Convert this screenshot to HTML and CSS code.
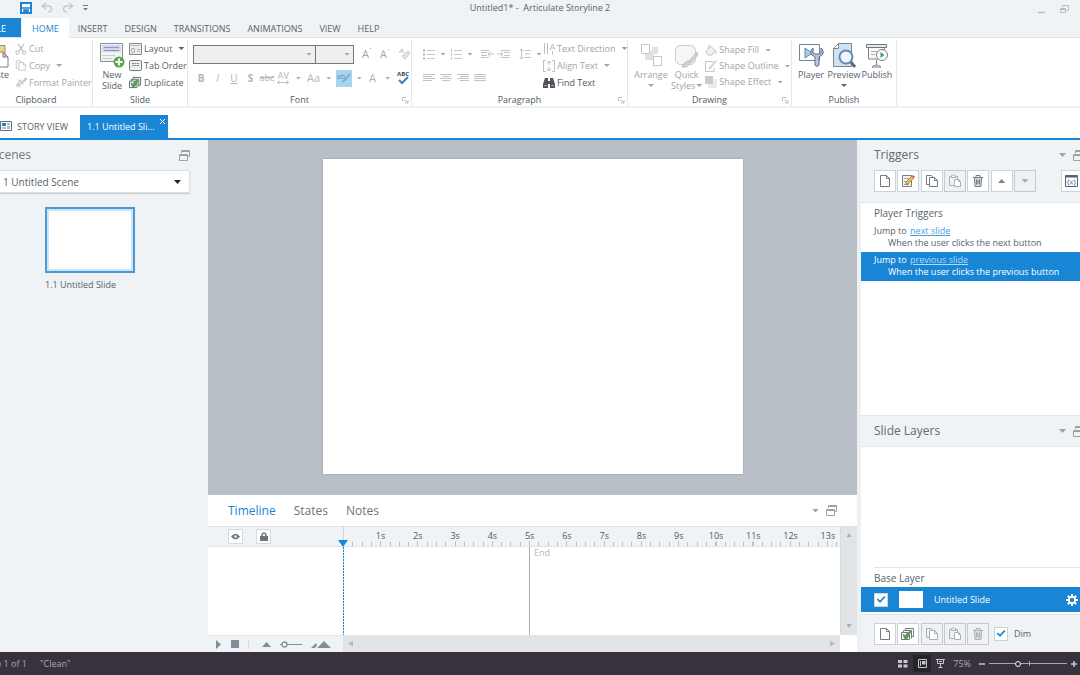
FILE: index.html
```html
<!DOCTYPE html>
<html lang="en">
<head>
<meta charset="utf-8">
<title>Untitled1* - Articulate Storyline 2</title>
<link rel="stylesheet" href="styles.css">
</head>
<body>
<svg class="defs" aria-hidden="true">
  <symbol id="restore" viewBox="0 0 11 11"><path d="M2.500 3V.500h8v6h-2M2.500 1.500h8M.5 4.500h8v6h-8zM.5 5.500h8" fill="none" stroke="currentColor"/></symbol>
  <symbol id="page" viewBox="0 0 14 14"><path d="M2.500 1.500h6l3 3v8h-9zM8.500 1.500v3h3" fill="#fff" stroke="currentColor"/></symbol>
  <symbol id="copy" viewBox="0 0 14 14"><path d="M1.500 10.500v-9h5l2 2M1.500 10.500h3" fill="none" stroke="currentColor"/><path d="M4.500 3.500h5l3 3v6h-8zM9.500 3.500v3h3" fill="#fff" stroke="currentColor"/></symbol>
  <symbol id="paste" viewBox="0 0 14 14"><path d="M6 11.500H1.500v-9h2m4 0h2v3M3.500 3.500v-2h1l1-1 1 1h1v2z" fill="none" stroke="currentColor"/><path d="M6.500 5.500h4l2 2v5h-6zM10.500 5.500v2h2" fill="#fff" stroke="currentColor"/></symbol>
  <symbol id="trash" viewBox="0 0 14 14"><path d="M3.500 4h7l-.5 8.500H4z" fill="currentColor" fill-opacity=".25"/><path d="M2 3.500h10M5 3V1.500h4V3M3.500 4l.5 8.500h6l.5-8.500M5.500 5.500v5M7 5.500v5M8.500 5.500v5" fill="none" stroke="currentColor"/></symbol>
  <symbol id="dup" viewBox="0 0 14 14"><path d="M4.500 3.500v-2h8v8h-2M2.500 5.500v-2h8v8" fill="#fff" stroke="currentColor"/><path d="M.5 5.500h8v7h-8z" fill="#fff" stroke="currentColor"/><path d="M1.500 7.500l1.500-.5 1 1.500q2-4 7-5-2 3-2.500 5.500L6 12H3.500z" fill="#5c9e4f"/></symbol>
  <symbol id="launch" viewBox="0 0 7 7"><path d="M.5 4V.5H4M2.500 2.500l3 3M6 3v3H3" fill="none" stroke="currentColor"/></symbol>
</svg>

<header class="titlebar">
  <div class="quick">
    <button aria-label="Save"><svg width="12" height="12" viewBox="0 0 12 12"><path d="M1 1h10v10H1z" fill="#fff" stroke="#1f84cf" stroke-width="2"/><path d="M1 6h10M4 8h4v3H4z" stroke="#1f84cf" stroke-width="1.500" fill="#1f84cf"/></svg></button>
    <button aria-label="Undo"><svg width="12" height="11" viewBox="0 0 12 11"><path d="M5 1L1.500 4 5 7M2 4h5q3.500 0 3.500 3T7 10" fill="none" stroke="#c7cbce" stroke-width="1.600"/></svg></button>
    <button aria-label="Redo"><svg width="12" height="11" viewBox="0 0 12 11"><path d="M7 1l3.500 3L7 7M10 4H5Q1.500 4 1.500 7T5 10" fill="none" stroke="#c7cbce" stroke-width="1.600"/></svg></button>
    <button aria-label="Customize toolbar"><svg width="5" height="6" viewBox="0 0 5 6"><path d="M0 0h5v1H0zM0 3h5L2.500 5.500z" fill="#747a80"/></svg></button>
  </div>
  <h1>Untitled1* -&nbsp; Articulate Storyline 2</h1>
  <div class="win">
    <button aria-label="Minimize"><svg width="8" height="9" viewBox="0 0 8 9"><path d="M0 7.500h7" stroke="#b9bdc0" stroke-width="1.500"/></svg></button>
    <button aria-label="Restore"><svg width="9" height="9" viewBox="0 0 9 9"><path d="M2.500 2.500v-2h6v5h-2M.5 3.500h5v4h-5zM.5 4.500h5" fill="none" stroke="#b9bdc0"/></svg></button>
  </div>
</header>

<nav class="tabs">
  <button class="file">FILE</button>
  <button class="home">HOME</button>
  <button>INSERT</button><button>DESIGN</button><button>TRANSITIONS</button><button>ANIMATIONS</button><button>VIEW</button><button>HELP</button>
</nav>

<section class="ribbon">
  <div class="group clipboard">
    <div class="body">
      <button class="paste"><svg width="24" height="25" viewBox="0 0 24 25"><path d="M1 2.500h19v19H1z" fill="#f1d48c" stroke="#8b8f93"/><path d="M10 9h8l5 5v10H10zM18 9v5h5" fill="#fff" stroke="#7c8185"/></svg><span>Paste</span></button>
      <div class="stack off">
        <button><svg width="12" height="12" viewBox="0 0 12 12"><path d="M3 1l5 7M9 1L4 8" stroke="#b6babd" stroke-width="1.200"/><circle cx="2.500" cy="9.500" r="1.700" fill="none" stroke="#b6babd"/><circle cx="9" cy="9.500" r="1.700" fill="none" stroke="#b6babd"/></svg>Cut</button>
        <button><svg class="pale" width="12" height="13"><use href="#copy"/></svg>Copy<i class="car"></i></button>
        <button><svg width="12" height="12" viewBox="0 0 12 12"><path d="M11.500 1L8 5" stroke="#c3c6c9" stroke-width="2.500"/><path d="M5 2l4 5-2 1-4-4zM3 5l3 3-2 3-1-2-3 1z" fill="#cdd0d2"/></svg>Format Painter</button>
      </div>
    </div>
    <footer><h2>Clipboard</h2></footer>
  </div>
  <div class="group slide">
    <div class="body">
      <button class="big"><svg width="26" height="26" viewBox="0 0 26 26"><path d="M1.500.5h22v18h-22z" fill="#f1f3f5" stroke="#8b9095"/><path d="M3 2h19v7H3z" fill="#cfd7ee"/><path d="M5 4.500h15M5 7.500h15" stroke="#8e9ab8"/><path d="M3 12.500h13M3 15.500h10" stroke="#c7cbce"/><circle cx="20" cy="19" r="5.500" fill="#57a74c"/><path d="M20 15.500v7M16.500 19h7" stroke="#fff" stroke-width="2"/></svg>New<br>Slide</button>
      <div class="stack">
        <button><svg width="13" height="12" viewBox="0 0 13 12"><path d="M.5.5h12v11H.5z" fill="#eee" stroke="#85898d"/><path d="M2 2.500h9M2.500 5.500h3v4h-3zM8 6.500h3M8 8.500h3" fill="#e2e4e5" stroke="#b3b7ba"/></svg>Layout<i class="car"></i></button>
        <button><svg width="13" height="12" viewBox="0 0 13 12"><rect x=".5" y=".5" width="12" height="10" rx="1" fill="#eceeef" stroke="#777c80"/><path d="M3 3.500h7M3 5.500h7" stroke="#888d91" stroke-dasharray="2 .5"/></svg>Tab Order</button>
        <button><svg width="13" height="13"><use href="#dup"/></svg>Duplicate</button>
      </div>
    </div>
    <footer><h2>Slide</h2></footer>
  </div>
  <div class="group font">
    <div class="body rows off">
      <div class="row">
        <span class="sel wide"><select aria-label="Font family" disabled><option></option></select><i class="car"></i></span><span class="sel"><select aria-label="Font size" disabled><option></option></select><i class="car"></i></span>
        <div class="sizes"><button aria-label="Grow font"><span class="ltr">A<sup>ˆ</sup></span></button><button aria-label="Shrink font"><span class="ltr small">A<sup>ˇ</sup></span></button><button aria-label="Clear formatting"><svg width="12" height="12" viewBox="0 0 12 12"><path d="M1 5l3-4 2 4M6 7l4-4 2 2-5 6-3-3z" fill="#e6e6e6" stroke="#c4c6c8"/></svg></button></div>
      </div>
      <div class="row marks">
        <button><b>B</b></button><button><em>I</em></button><button><u>U</u></button><button><b>S</b></button><button class="strike">abc</button><button class="av"><span>AV</span><svg width="12" height="5" viewBox="0 0 12 5"><path d="M0 2.500h12M2.500.5l-2 2 2 2M9.500.5l2 2-2 2" fill="none" stroke="#bbbfc2"/></svg></button><i class="car"></i><button class="aa">Aa</button><i class="car"></i><button class="hl" aria-label="Highlight"><svg width="14" height="12" viewBox="0 0 14 12"><text x="0" y="7" font-size="7" fill="#6e91a8">ab</text><path d="M13 2L8 8l-3 2" stroke="#78a0b9" stroke-width="1.500" fill="none"/></svg></button><i class="car"></i><button class="aa">A</button><i class="car"></i><button class="spell" aria-label="Spelling"><svg width="14" height="14" viewBox="0 0 14 14"><text x="1" y="5" font-size="6" font-weight="700" fill="#444">ABC</text><path d="M3 9l3 3 6-6" stroke="#3e7fc0" stroke-width="2" fill="none"/></svg></button>
      </div>
    </div>
    <footer><h2>Font</h2><svg width="7" height="7"><use href="#launch"/></svg></footer>
  </div>
  <div class="group para">
    <div class="body off">
      <div class="rows">
        <div class="row bullets">
          <button aria-label="Bullets"><svg width="12" height="11" viewBox="0 0 12 11"><path d="M4 1.500h8M4 5.500h8M4 9.500h8" stroke="#c6c9cb"/><path d="M0 1.500h2M0 5.500h2M0 9.500h2" stroke="#b0b4b7" stroke-width="2"/></svg></button><i class="car"></i>
          <button aria-label="Numbering"><svg width="12" height="11" viewBox="0 0 12 11"><path d="M4 1.500h8M4 5.500h8M4 9.500h8" stroke="#c6c9cb"/><path d="M1.500 0v3M1.500 4v3M1.500 8v3" stroke="#c0c3c6"/></svg></button><i class="car"></i>
          <button class="dec" aria-label="Decrease indent"><svg width="13" height="10" viewBox="0 0 13 10"><path d="M0 1.500h8M0 3.500h6M0 6.500h6M0 8.500h8M7 5h6M9.500 2.500L7 5l2.500 2.500" stroke="#c0c3c6" fill="none"/></svg></button>
          <button aria-label="Increase indent"><svg width="13" height="10" viewBox="0 0 13 10"><path d="M4 1.500h9M7 3.500h6M7 6.500h6M4 8.500h9M0 5h6M3.500 2.500L6 5 3.500 7.500" stroke="#c0c3c6" fill="none"/></svg></button>
          <button class="spacing" aria-label="Line spacing"><svg width="12" height="12" viewBox="0 0 12 12"><path d="M2.500 1v10M.5 3l2-2 2 2M.5 9l2 2 2-2M6 2.500h6M6 6h5M6 9.500h6" stroke="#c0c3c6" fill="none"/></svg></button><i class="car"></i>
        </div>
        <div class="row aligns">
          <button aria-label="Align left"><svg width="12" height="8" viewBox="0 0 12 8"><path d="M0 .5h12M0 2.500h9M0 4.500h12M0 6.500h9" stroke="#c0c3c6"/></svg></button>
          <button aria-label="Center"><svg width="12" height="8" viewBox="0 0 12 8"><path d="M0 .5h12M2 2.500h8M0 4.500h12M2 6.500h8" stroke="#c0c3c6"/></svg></button>
          <button aria-label="Align right"><svg width="12" height="8" viewBox="0 0 12 8"><path d="M0 .5h12M3 2.500h9M0 4.500h12M3 6.500h9" stroke="#c0c3c6"/></svg></button>
          <button aria-label="Justify"><svg width="12" height="8" viewBox="0 0 12 8"><path d="M0 .5h12M0 2.500h12M0 4.500h12M0 6.500h12" stroke="#c0c3c6"/></svg></button>
        </div>
      </div>
      <div class="stack">
        <button><svg width="12" height="12" viewBox="0 0 12 12"><path d="M1.500 0v11M4.500 0v11M7 7l2.500-6L12 7M8 5h3M9.500 8v4" stroke="#bbbfc2" fill="none"/></svg>Text Direction<i class="car"></i></button>
        <button><svg width="12" height="12" viewBox="0 0 12 12"><path d="M3 .5H.5v11H3M9 .5h2.500v11H9M6 1v4M6 7v4M4 3l2-2 2 2M4 9l2 2 2-2" stroke="#bbbfc2" fill="none"/></svg>Align Text<i class="car"></i></button>
        <button class="on"><svg width="12" height="11" viewBox="0 0 12 11"><path d="M2 1h3v3h2V1h3l2 6v4H7V7H5v4H0V7z" fill="#50555b"/><path d="M1.500 8.500h2M8.500 8.500h2" stroke="#c9ccce"/></svg>Find Text</button>
      </div>
    </div>
    <footer><h2>Paragraph</h2><svg width="7" height="7"><use href="#launch"/></svg></footer>
  </div>
  <div class="group drawing">
    <div class="body off">
      <button class="big arr"><svg width="23" height="26" viewBox="0 0 23 26"><path d="M5 8h9v9H5zM12 4h6v7h-6z" fill="#e1e2e3"/><path d="M1.500 1.500h8v9h-8zM13.500 13.500h8v9h-8z" fill="#fff" stroke="#c5c7c9"/></svg>Arrange<i class="car"></i></button>
      <button class="big"><svg width="25" height="26" viewBox="0 0 25 26"><rect x="1.500" y="2.500" width="20" height="19" rx="5" fill="#f6f6f6" stroke="#c9cbcd"/><path d="M23 9l-8 9 2 2 7-8zM14 18q-4 1-6 6 6 1 8-4z" fill="#d1d2d3" stroke="#bdbfc1"/></svg>Quick<br><span>Styles<i class="car"></i></span></button>
      <div class="stack">
        <button><svg width="12" height="12" viewBox="0 0 12 12"><path d="M5 2l5 4-3 5H3L1 7zM4 1v4M11 6v4" fill="#f2f2f2" stroke="#c4c6c8"/></svg>Shape Fill<i class="car"></i></button>
        <button><svg width="12" height="12" viewBox="0 0 12 12"><path d="M8 1.500H.5v10H9V8M11.500 1L6 8l-2 1 1-2 5-6z" fill="none" stroke="#c4c6c8"/></svg>Shape Outline<i class="car"></i></button>
        <button><svg width="12" height="12" viewBox="0 0 12 12"><path d="M3 3h9v9H3z" fill="#eaebec"/><path d="M0 0h8v8H0z" fill="#c9cbcd"/></svg>Shape Effect<i class="car"></i></button>
      </div>
    </div>
    <footer><h2>Drawing</h2><svg width="7" height="7"><use href="#launch"/></svg></footer>
  </div>
  <div class="group publish">
    <div class="body">
      <button class="big"><svg width="26" height="26" viewBox="0 0 26 26"><path d="M1.500 1.500h20v16h-20z" fill="#fff" stroke="#7b838b"/><path d="M7 5v10l7-5z" fill="#a9cce7" stroke="#6289ad"/><path d="M15 5q-4 4-1 7l3 2v8q2 3 4 0v-8l3-2q3-3-1-7v5l-2 1h-4l-2-1z" fill="#b4c7dd" stroke="#596f87"/></svg>Player</button>
      <button class="big"><svg width="26" height="26" viewBox="0 0 26 26"><path d="M7.500.5h13v23h-18v-18zM2.500 5.500h5v-5" fill="#cfe2f4" stroke="#7b838b"/><path d="M19 18l5 6" stroke="#596f87" stroke-width="3"/><circle cx="15" cy="14" r="6.500" fill="#edf6fe" stroke="#6689b2" stroke-width="2"/></svg>Preview<i class="car"></i></button>
      <button class="big"><svg width="24" height="26" viewBox="0 0 24 26"><path d="M1.500 1.500h20v3h-20z" fill="#e8eaeb" stroke="#6f767c"/><path d="M3.500 5v11h16V5M11.500 17v5M7 24q4-4 9 0z" fill="#f8f9f9" stroke="#7b8288"/><path d="M6 8.500h6M6 11.500h4" stroke="#adb2b5"/><circle cx="17" cy="12" r="5.500" fill="#fff" stroke="#7b8288"/><path d="M15.500 9l4 3-4 3z" fill="#479b76"/></svg>Publish</button>
    </div>
    <footer><h2>Publish</h2></footer>
  </div>
</section>

<nav class="docs">
  <button class="story"><svg width="12" height="11" viewBox="0 0 12 11"><path d="M.5.5h11v9H.5z" fill="#fff" stroke="#666c72"/><path d="M2 2h4v3H2z" fill="#1985d5"/><path d="M2 6h4v2H2zM7 2h3v2H7zM7 5h3v3H7z" fill="#b3bbc2"/></svg>STORY VIEW</button>
  <button class="doc">1.1 Untitled Sli...<svg width="5" height="5" viewBox="0 0 5 5"><path d="M0 0l5 5M5 0L0 5" stroke="#fff"/></svg></button>
</nav>

<main>
  <aside class="scenes">
    <div class="head"><h2>Scenes</h2><button aria-label="Undock"><svg width="11" height="11"><use href="#restore"/></svg></button></div>
    <div class="picker"><select aria-label="Scene"><option>1 Untitled Scene</option></select><i class="car"></i></div>
    <figure><div class="thumb"></div><figcaption>1.1 Untitled Slide</figcaption></figure>
  </aside>

  <section class="center">
    <div class="stage"><div class="canvas"></div></div>
    <div class="timeline">
      <div class="ptabs">
        <button class="cur">Timeline</button><button>States</button><button>Notes</button>
        <span class="tools"><i class="car"></i><svg width="11" height="11"><use href="#restore"/></svg></span>
      </div>
      <div class="grid">
        <div class="eyes">
          <button aria-label="Show all"><svg width="9" height="7" viewBox="0 0 9 7"><path d="M0 3.500Q4.500-2 9 3.500 4.500 9 0 3.500z" fill="#6c747b"/><circle cx="4.500" cy="3.500" r="1.200" fill="#fff"/></svg></button>
          <button aria-label="Lock all"><svg width="8" height="9" viewBox="0 0 8 9"><path d="M2 4V2.500q2-3 4 0V4" fill="none" stroke="#6c747b" stroke-width="1.500"/><path d="M0 4h8v5H0z" fill="#6c747b"/></svg></button>
        </div>
        <div class="ruler"><span>1s</span><span>2s</span><span>3s</span><span>4s</span><span>5s</span><span>6s</span><span>7s</span><span>8s</span><span>9s</span><span>10s</span><span>11s</span><span>12s</span><span>13s</span></div>
        <div class="vscroll"><i class="up"></i><i class="down"></i></div>
        <div class="names"></div>
        <div class="track"><span class="end">End</span><svg class="head-mark" width="10" height="7" viewBox="0 0 10 7"><path d="M0 0h10L5 7z" fill="#1985d5"/></svg></div>
        <div class="play">
          <button aria-label="Play"><svg width="6" height="9" viewBox="0 0 6 9"><path d="M0 0l5 4.500L0 9z" fill="#848d95"/></svg></button>
          <button aria-label="Stop"><svg width="8" height="8" viewBox="0 0 8 8"><path d="M0 0h8v8H0z" fill="#848d95"/></svg></button>
          <i class="bar"></i>
          <svg width="9" height="5" viewBox="0 0 9 5"><path d="M0 5l4.500-5L9 5z" fill="#848d95"/></svg>
          <svg width="22" height="7" viewBox="0 0 22 7"><path d="M0 3.500h2M7 3.500h15" stroke="#848d95"/><circle cx="4.500" cy="3.500" r="2.500" fill="none" stroke="#848d95" stroke-width="1.300"/></svg>
          <svg width="20" height="7" viewBox="0 0 20 7"><path d="M0 7l5-5 1 2-2 3zM6 7l7-7 7 7z" fill="#848d95"/></svg>
        </div>
        <div class="hscroll"><i class="lt"></i><i class="rt"></i></div>
      </div>
    </div>
  </section>

  <aside class="side">
    <div class="trig-head">
      <div class="head"><h2>Triggers</h2><span class="tools"><i class="car"></i><svg width="11" height="11"><use href="#restore"/></svg></span></div>
      <div class="bar-row">
        <div class="btns seven">
          <button aria-label="New trigger"><svg width="14" height="14"><use href="#page"/></svg></button>
          <button aria-label="Edit trigger"><svg width="14" height="14" viewBox="0 0 14 14"><path d="M1.500 1.500h9v11h-9z" fill="#f0f1f3" stroke="#7a8086"/><path d="M3 4.500h5M3 7.500h4M3 10.500h5" stroke="#a5abb2"/><path d="M5 8l6-6 2 2-6 6-2 .5z" fill="#f2bd52" stroke="#8c6b3c" stroke-width=".7"/><path d="M11 2l1-1 2 2-1 1z" fill="#c7515a"/></svg></button>
          <button aria-label="Copy trigger"><svg width="14" height="14"><use href="#copy"/></svg></button>
          <button disabled aria-label="Paste trigger"><svg width="14" height="14"><use href="#paste"/></svg></button>
          <button aria-label="Delete trigger"><svg width="14" height="14"><use href="#trash"/></svg></button>
          <button aria-label="Move up"><i class="up"></i></button>
          <button disabled aria-label="Move down"><i class="down"></i></button>
        </div>
        <div class="btns"><button aria-label="Variables"><svg width="14" height="14" viewBox="0 0 14 14"><path d="M.5 1.500h12v11H.5z" fill="#fff" stroke="#59636d"/><path d="M1 2.500h11" stroke="#59636d" stroke-width="2"/><path d="M5 6.500l3 4M8 6.500l-3 4M3.500 5.500q-1.500 3 0 6M9.500 5.500q1.500 3 0 6" stroke="#558ccc" fill="none"/></svg></button></div>
      </div>
    </div>
    <div class="trig-list">
      <h3>Player Triggers</h3>
      <div class="trig"><p>Jump to <a href="#next">next slide</a></p><p class="when">When the user clicks the next button</p></div>
      <div class="trig picked"><p>Jump to <a href="#previous">previous slide</a></p><p class="when">When the user clicks the previous button</p></div>
    </div>
    <div class="head layers-head"><h2>Slide Layers</h2><span class="tools"><i class="car"></i><svg width="11" height="11"><use href="#restore"/></svg></span></div>
    <div class="layers">
      <h3>Base Layer</h3>
      <div class="layer"><input type="checkbox" checked aria-label="Show layer"><span class="mini"></span><span>Untitled Slide</span>
        <button aria-label="Layer settings"><svg width="12" height="12" viewBox="0 0 12 12"><circle cx="6" cy="6" r="3.200" fill="none" stroke="#fff" stroke-width="2"/><path d="M6 0v2M6 10v2M0 6h2M10 6h2M1.800 1.800l1.400 1.400M8.800 8.800l1.400 1.400M1.800 10.200l1.400-1.400M8.800 3.200l1.400-1.400" stroke="#fff" stroke-width="2"/></svg></button></div>
    </div>
    <div class="layer-foot">
      <div class="btns five">
        <button aria-label="New layer"><svg width="14" height="14"><use href="#page"/></svg></button>
        <button aria-label="Duplicate layer"><svg width="14" height="14"><use href="#dup"/></svg></button>
        <button disabled aria-label="Copy layer"><svg width="14" height="14"><use href="#copy"/></svg></button>
        <button disabled aria-label="Paste layer"><svg width="14" height="14"><use href="#paste"/></svg></button>
        <button disabled aria-label="Delete layer"><svg width="14" height="14"><use href="#trash"/></svg></button>
      </div>
      <label><input type="checkbox" checked>Dim</label>
    </div>
  </aside>
</main>

<footer class="status">
  <span class="count">Slide 1 of 1</span><span>"Clean"</span>
  <div class="zoom">
    <button aria-label="Story view"><svg width="10" height="8" viewBox="0 0 10 8"><path d="M0 0h4v3H0zM5.500 0h4v3h-4zM0 4.500h4v3H0zM5.500 4.500h4v3h-4z" fill="#c9c8cc"/></svg></button>
    <button class="active" aria-label="Slide view"><svg width="9" height="9" viewBox="0 0 9 9"><path d="M.5.5h8v8h-8z" fill="none" stroke="#c9c8cc"/><path d="M2 2h1v5H2zM4 2h3.500v3.500H4z" fill="#c9c8cc"/></svg></button>
    <button aria-label="Preview"><svg width="9" height="9" viewBox="0 0 9 9"><path d="M0 .5h9M1.500 1v3.500h6V1M4.500 5v3M2.500 8.500h4M3 2.500h3" fill="none" stroke="#c9c8cc"/></svg></button>
    <span>75%</span>
    <button aria-label="Zoom out"><svg width="6" height="6" viewBox="0 0 6 6"><path d="M0 3h6" stroke="#c9c8cc" stroke-width="1.500"/></svg></button>
    <input type="range" min="0" max="100" value="36" aria-label="Zoom">
    <button aria-label="Zoom in"><svg width="6" height="6" viewBox="0 0 6 6"><path d="M0 3h6M3 0v6" stroke="#c9c8cc" stroke-width="1.500"/></svg></button>
  </div>
</footer>
</body>
</html>
```
FILE: styles.css
```css
* { box-sizing: border-box; }
html, body { height: 100%; }
body { margin: 0; display: flex; flex-direction: column; overflow: hidden; background: #fff; color: #56636d; font: 9px/12px "Open Sans", "Noto Sans", sans-serif; }
h1, h2, h3, p, figure { margin: 0; font-weight: 400; }
h1, h3 { font-size: 9px; }
button, select { font: inherit; color: inherit; background: none; border: 0; padding: 0; margin: 0; white-space: nowrap; }
svg { flex: none; display: block; }
.defs { position: absolute; width: 0; height: 0; }
button { display: flex; align-items: center; justify-content: center; }

.car { flex: none; width: 6px; height: 3px; background: currentColor; clip-path: polygon(0 0, 100% 0, 50% 100%); }
.up, .down { width: 7px; height: 4px; background: #79818a; }
.up { clip-path: polygon(50% 0, 100% 100%, 0 100%); }
.down { clip-path: polygon(0 0, 100% 0, 50% 100%); }
.lt, .rt { width: 5px; height: 6px; background: #b4babf; }
.lt { clip-path: polygon(0 50%, 100% 0, 100% 100%); }
.rt { clip-path: polygon(0 0, 100% 50%, 0 100%); }
.pale { color: #c0c4c7; }

.titlebar { height: 18px; flex: none; display: grid; grid-template-columns: 1fr auto 1fr; background: #eff3f5; }
.titlebar h1 { line-height: 16px; }
.quick { display: flex; align-items: center; gap: 9px; padding: 0 0 3px 20px; }
.win { display: flex; justify-content: flex-end; align-items: center; gap: 14px; padding-right: 11px; }

.tabs { display: flex; flex: none; height: 20px; background: #eff3f5; border-bottom: 1px solid #e1e6ea; }
.tabs button { padding: 2px 8px 0 9px; }
.tabs .file { width: 21px; padding: 2px 15px 0 0; justify-content: flex-end; overflow: hidden; background: #1985d5; color: #fff; }
.tabs .home { margin-left: 1px; padding: 2px 10px 0; background: #fff; color: #1985d5; height: 20px; }

.ribbon { display: flex; flex: none; height: 70px; border-bottom: 2px solid #edf1f4; }
.group { display: flex; flex-direction: column; border-right: 1px solid #e4e8ec; margin-top: 2px; }
.group .body { display: flex; flex: 1; min-height: 0; padding-left: 6px; }
.group footer { flex: none; display: grid; grid-template-columns: 12px 1fr 12px; align-items: center; height: 12px; color: #b9bec2; }
.group h2 { grid-column: 2; font-size: 9px; line-height: 12px; text-align: center; color: #4f5a63; }
.group footer svg { justify-self: center; }
.clipboard { width: 93px; } .slide { width: 95px; } .font { width: 224px; }
.para { width: 216px; } .drawing { width: 164px; } .publish { width: 105px; }
.clipboard footer { grid-template-columns: 0 72px; }
.clipboard .body { padding: 0; }
.paste { width: 9px; flex-direction: column; align-items: flex-end; justify-content: flex-start; gap: 1px; padding: 3px 0 0; overflow: hidden; }
.clipboard .stack { padding-left: 6px; }
.stack button { height: 17px; gap: 2px; justify-content: flex-start; }
.stack .car { margin-left: 4px; }
.off { color: #9fa5a9; }
.off .on { color: #4f5a63; }
.big { flex-direction: column; justify-content: flex-start; line-height: 11px; padding-top: 3px; }
.big > .car { margin-top: 4px; }
.big span { display: flex; align-items: center; gap: 1px; }
.slide .stack { padding-left: 4px; }
.slide .big { width: 26px; }

.row { display: flex; align-items: center; height: 24px; }
.group .rows { flex-direction: column; padding-top: 2px; }
.font .rows { padding-left: 5px; }
.sel { position: relative; display: flex; width: 39px; height: 19px; margin-left: -1px; }
.sel.wide { width: 123px; margin: 0; }
.sel select { appearance: none; width: 100%; border: 1px solid #777; background: #efefef; border-radius: 0; opacity: 1; }
.sel .car { position: absolute; right: 4px; top: 8px; }
.sizes { display: flex; justify-content: space-between; width: 48px; margin-left: 8px; }
.ltr { font-size: 11px; } .ltr.small { font-size: 10px; } .ltr sup { font-size: 7px; line-height: 0; }
.marks { color: #b0b5b8; }
.marks button { width: 17px; height: 17px; font-size: 10px; }
.marks .strike { text-decoration: line-through; font-size: 9px; }
.marks .av { flex-direction: column; font-size: 9px; line-height: 9px; }
.marks .aa { font-size: 11px; }
.marks .car { margin: 0 4px 0 4px; }
.marks .hl { background: #a6d5f2; }
.marks .hl + .car { margin-right: 2px; }

.para .body { padding-left: 11px; }
.para .rows { width: 122px; }
.bullets { gap: 3px; }
.bullets .car { margin: 0 1px 0 2px; }
.bullets .dec { margin-left: 4px; }
.bullets .spacing { margin-left: 6px; }
.aligns { gap: 5px; }
.drawing .body { gap: 3px; }
.drawing .arr { width: 34px; }
.drawing .stack { padding-top: 2px; }
.drawing .stack button { height: 16px; }
.publish .body { padding-left: 3px; gap: 1px; }
.publish .big { width: 32px; }

.docs { display: flex; flex: none; align-items: stretch; height: 32px; padding-top: 7px; border-bottom: 2px solid #1985d5; }
.story { width: 80px; gap: 5px; justify-content: flex-start; }
.doc { position: relative; padding: 0 13px 0 7px; background: #1985d5; color: #fff; }
.doc svg { position: absolute; right: 3px; top: 4px; }

main { flex: 1; min-height: 0; display: grid; grid-template-columns: 208px minmax(0, 1fr) 223px; }
.head { display: flex; align-items: center; height: 30px; }
.head h2 { font-size: 12px; line-height: 16px; }
.tools { display: flex; align-items: center; gap: 7px; margin-left: auto; color: #9aa2a8; }
.tools .car { height: 4px; width: 7px; }

.scenes { background: #eff3f5; overflow: hidden; }
.scenes .head { justify-content: space-between; padding-right: 18px; color: #6e7a84; }
.scenes h2 { width: 31px; display: flex; justify-content: flex-end; }
.scenes .head button { color: #9aa2a8; }
.picker { position: relative; margin: 0 18px 0 -2px; height: 23px; background: #fff; border: 1px solid #dce1e4; box-shadow: 0 1px 1px #c9ced2; }
.picker select { appearance: none; width: 100%; height: 100%; padding-left: 4px; font-size: 10px; }
.picker .car { position: absolute; right: 8px; top: 9px; width: 7px; height: 4px; color: #222; }
.scenes figure { padding: 14px 0 0 45px; }
.thumb { width: 90px; height: 66px; background: #fff; border: 2px solid #4b9ad5; box-shadow: inset 0 0 0 2px #cbe6f8; }
.scenes figcaption { margin-top: 6px; }

.center { display: flex; flex-direction: column; min-height: 0; }
.stage { flex: 1; min-height: 0; display: flex; justify-content: center; padding: 19px 0 21px; background: #b8bfc7; }
.canvas { height: 100%; aspect-ratio: 4 / 3; background: #fff; box-shadow: 0 0 2px #8e969e; }
.timeline { flex: none; background: #fff; }
.ptabs { display: flex; align-items: center; height: 31px; padding: 0 20px; gap: 18px; font-size: 12px; color: #6a757e; }
.ptabs .cur { color: #1985d5; }
.grid { display: grid; grid-template-columns: 135px minmax(0, 1fr) 17px; grid-template-rows: 21px 88px 17px; }
.eyes, .ruler { background: #eff3f5; border: solid #e0e5e8; border-width: 1px 0; }
.eyes { display: flex; align-items: center; gap: 13px; padding-left: 20px; }
.eyes button { width: 15px; height: 15px; background: #fff; border: 1px solid #d5dade; }
.ruler { display: flex; padding-left: 3.6%; border-left: 1px solid #cdd3d7; color: #4f5962; background: repeating-linear-gradient(to right, transparent 0, transparent calc(1.876% - 1px), #b9c1c6 calc(1.876% - 1px), #b9c1c6 1.876%) 0 100% / 100% 4px no-repeat #eff3f5; overflow: hidden; }
.ruler span { flex: 0 0 7.8%; text-align: center; line-height: 18px; background: linear-gradient(#b9c1c6, #b9c1c6) 50% 100% / 1px 5px no-repeat; }
.vscroll { grid-row: 1 / 3; grid-column: 3; display: flex; flex-direction: column; justify-content: space-between; align-items: center; padding: 7px 0; background: #e0e4e6; border-left: 1px solid #d5dade; }
.vscroll i { width: 5px; background: #a8afb5; }
.names { grid-row: 2; grid-column: 1; }
.track { grid-row: 2; grid-column: 2; position: relative; background: repeating-linear-gradient(#1985d5 0 2px, #d3e9f8 2px 3px) 0 0 / 1px 100% no-repeat; }
.head-mark { position: absolute; left: -5px; top: -7px; }
.end { position: absolute; left: 37.4%; top: 0; bottom: 0; padding-left: 4px; border-left: 1px solid #a3adb4; color: #b3bac0; }
.play { display: flex; align-items: center; padding-left: 8px; background: #eff3f5; border-top: 1px solid #e0e5e8; }
.play > * { margin-right: 9px; }
.play .bar { width: 1px; height: 9px; margin-right: 13px; background: #d5dade; }
.hscroll { display: flex; align-items: center; justify-content: space-between; padding: 0 5px; background: #e0e4e6; }

.side { display: flex; flex-direction: column; min-height: 0; border-left: 4px solid #edf1f4; overflow: hidden; }
.side .head, .trig-head, .layer-foot { background: #eff3f5; }
.side .head { padding-left: 13px; color: #5e6a74; }
.side .head .tools { margin-right: -4px; }
.trig-head { height: 63px; border-bottom: 1px solid #e1e6e9; }
.bar-row { display: flex; justify-content: space-between; padding-left: 13px; margin-right: -3px; }
.btns { display: flex; justify-content: space-between; }
.seven { width: 162px; } .five { width: 115px; }
.btns button { width: 22px; height: 22px; background: #fff; border: 1px solid #cdd2d6; color: #737b82; }
.btns button:disabled { background: #f0f1f2; color: #aaafb3; border-color: #c4c9cd; }
.btns button:disabled i { background: #aaafb3; }
.trig-list { flex: 0 0 212px; padding-top: 3px; }
.side h3 { padding-left: 13px; font-size: 10px; line-height: 14px; }
.trig { padding: 2px 0 3px 13px; line-height: 12px; }
.trig-list h3 { margin-bottom: 3px; }
.trig a { color: #4a9edb; margin-left: 1px; }
.trig .when { padding-left: 14px; }
.trig.picked { background: #1985d5; color: #fff; }
.trig.picked a { color: #b5daf5; }
.layers-head { flex: none; height: 32px; border: solid #e1e6e9; border-width: 1px 0; }
.layers { flex: 1; display: flex; flex-direction: column; justify-content: flex-end; padding-bottom: 2px; border-bottom: 1px solid #e1e6e9; }
.layers h3 { margin-left: 13px; padding: 3px 0 2px; border-top: 1px solid #dfe4e8; }
.layer { display: flex; align-items: center; height: 25px; padding: 0 2px 0 13px; background: #1985d5; color: #fff; }
.layer button { margin-left: auto; }
.mini { width: 24px; height: 17px; margin: 0 11px; background: #fff; }
input[type="checkbox"] { appearance: none; flex: none; width: 14px; height: 14px; margin: 0; background: #fff; border: 1px solid #ccd3d8; display: grid; place-items: center; }
input[type="checkbox"]:checked::before { content: ""; width: 9px; height: 7px; background: #1985d5; clip-path: polygon(0 50%, 15% 35%, 40% 65%, 85% 0, 100% 15%, 40% 100%); }
.layer-foot { display: flex; align-items: center; height: 37px; padding-left: 13px; }
.layer-foot label { display: flex; align-items: center; gap: 6px; margin-left: 5px; }

.side .layers h3 { padding-left: 0; }
.status { display: flex; flex: none; align-items: center; height: 23px; background: #37323b; color: #aaa8ae; }
.status .count { width: 27px; margin-right: 13px; display: flex; justify-content: flex-end; overflow: hidden; white-space: nowrap; }
.zoom { display: flex; align-items: center; margin-left: auto; padding-right: 3px; }
.zoom button { height: 17px; }
.zoom .active { width: 18px; margin: 0 5px; background: #27232b; }
.zoom span { margin: 0 8px; }
.zoom input { appearance: none; width: 78px; height: 7px; margin: 0 4px; background: linear-gradient(#aaa8ae, #aaa8ae) 52% 50% / 1px 5px no-repeat, linear-gradient(#aaa8ae, #aaa8ae) 0 50% / 100% 1px no-repeat; }
.zoom input::-webkit-slider-thumb { appearance: none; width: 6px; height: 6px; border: 1px solid #eee; border-radius: 50%; background: #37323b; }
```
